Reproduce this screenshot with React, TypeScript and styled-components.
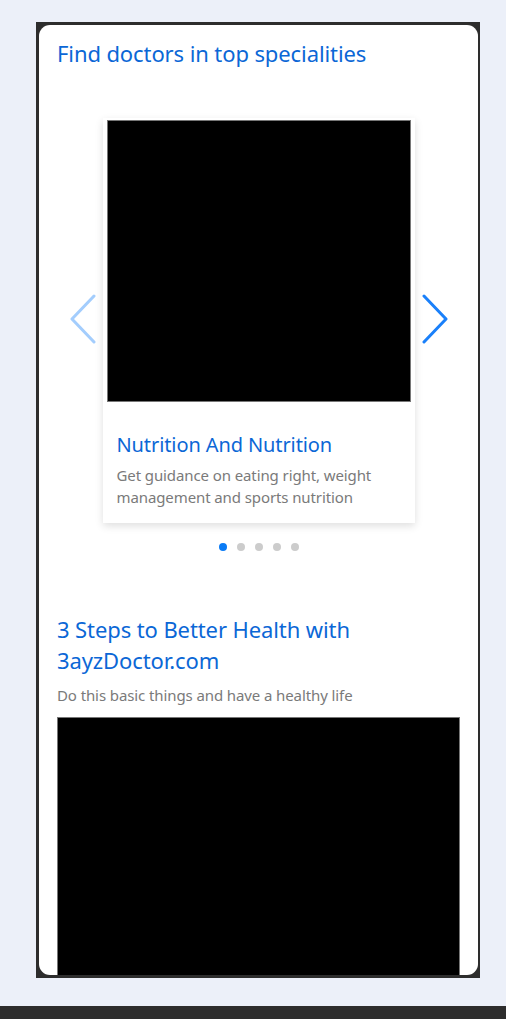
import React from 'react';
import styled, { createGlobalStyle } from 'styled-components';

const GlobalStyle = createGlobalStyle`
  html, body {
    margin: 0;
    padding: 0;
    background: #ecf0f9;
  }
  body {
    font-family: 'Noto Sans', 'Open Sans', sans-serif;
  }
`;

const Page = styled.div`
  height: 1019px;
  display: flex;
  flex-direction: column;
  overflow: hidden;
`;

const Frame = styled.div`
  margin: 22px 0 0 36px;
  width: 444px;
  height: 956px;
  box-sizing: border-box;
  background: #2d2d2d;
  padding: 3px 2px 3px 3px;
`;

const Panel = styled.div`
  height: 100%;
  background: #fff;
  border-radius: 11px;
  overflow: hidden;
  padding: 13px 18px 0;
  box-sizing: border-box;
`;

const Heading = styled.h2`
  margin: 0;
  font-weight: 400;
  font-size: 22px;
  line-height: 31px;
  color: #0b67d6;
  letter-spacing: -0.1px;
`;

const Carousel = styled.div`
  display: flex;
  align-items: center;
  justify-content: center;
  gap: 6px;
  margin-top: 49px;
`;

const Arrow = styled.button<{ $disabled?: boolean }>`
  border: 0;
  background: none;
  padding: 0;
  width: 28px;
  height: 60px;
  display: flex;
  align-items: center;
  justify-content: center;
  color: ${p => (p.$disabled ? '#a3cdfd' : '#1a80fa')};
  margin-top: -4px;
`;

const Card = styled.div`
  width: 312px;
  background: #fff;
  box-shadow: 0 3px 8px rgba(0, 0, 0, 0.13);
  padding: 2px 4px 0;
  box-sizing: border-box;
`;

const Picture = styled.div<{ $h: number }>`
  height: ${p => p.$h}px;
  background: #000;
  border: 1px solid #777;
  box-sizing: border-box;
`;

const CardBody = styled.div`
  padding: 29px 10px 15px;
`;

const CardTitle = styled.h3`
  margin: 0;
  font-weight: 400;
  font-size: 20px;
  line-height: 28px;
  color: #0b67d6;
  letter-spacing: -0.1px;
`;

const Text = styled.p`
  margin: 0;
  font-size: 15px;
  line-height: 22px;
  color: #7a7a7a;
  letter-spacing: -0.1px;
`;

const CardText = styled(Text)`
  margin-top: 5px;
`;

const Dots = styled.div`
  display: flex;
  justify-content: center;
  gap: 10px;
  margin-top: 20px;
`;

const Dot = styled.span<{ $active?: boolean }>`
  width: 8px;
  height: 8px;
  border-radius: 50%;
  background: ${p => (p.$active ? '#0a7bf5' : '#cccccc')};
`;

const Section = styled.div`
  margin-top: 63px;
`;

const SectionText = styled(Text)`
  margin-top: 8px;
`;

const SectionPicture = styled(Picture)`
  margin-top: 11px;
`;

const BottomBar = styled.div`
  margin-top: 28px;
  height: 13px;
  background: #2d2d2d;
`;

const Chevron = ({ dir }: { dir: 'left' | 'right' }) => (
  <svg width="28" height="50" viewBox="0 0 28 50" fill="none">
    <path
      d={dir === 'left' ? 'M25 2 L3 25 L25 48' : 'M3 2 L25 25 L3 48'}
      stroke="currentColor"
      strokeWidth="3"
      strokeLinecap="round"
      strokeLinejoin="round"
    />
  </svg>
);

export default function App() {
  return (
    <Page>
      <GlobalStyle />
      <Frame>
        <Panel>
          <Heading>Find doctors in top specialities</Heading>
          <Carousel>
            <Arrow $disabled aria-label="previous">
              <Chevron dir="left" />
            </Arrow>
            <Card>
              <Picture $h={282} />
              <CardBody>
                <CardTitle>Nutrition And Nutrition</CardTitle>
                <CardText>
                  Get guidance on eating right, weight management and sports nutrition
                </CardText>
              </CardBody>
            </Card>
            <Arrow aria-label="next">
              <Chevron dir="right" />
            </Arrow>
          </Carousel>
          <Dots>
            {[0, 1, 2, 3, 4].map(i => (
              <Dot key={i} $active={i === 0} />
            ))}
          </Dots>
          <Section>
            <Heading>3 Steps to Better Health with 3ayzDoctor.com</Heading>
            <SectionText>Do this basic things and have a healthy life</SectionText>
            <SectionPicture $h={300} />
          </Section>
        </Panel>
      </Frame>
      <BottomBar />
    </Page>
  );
}
